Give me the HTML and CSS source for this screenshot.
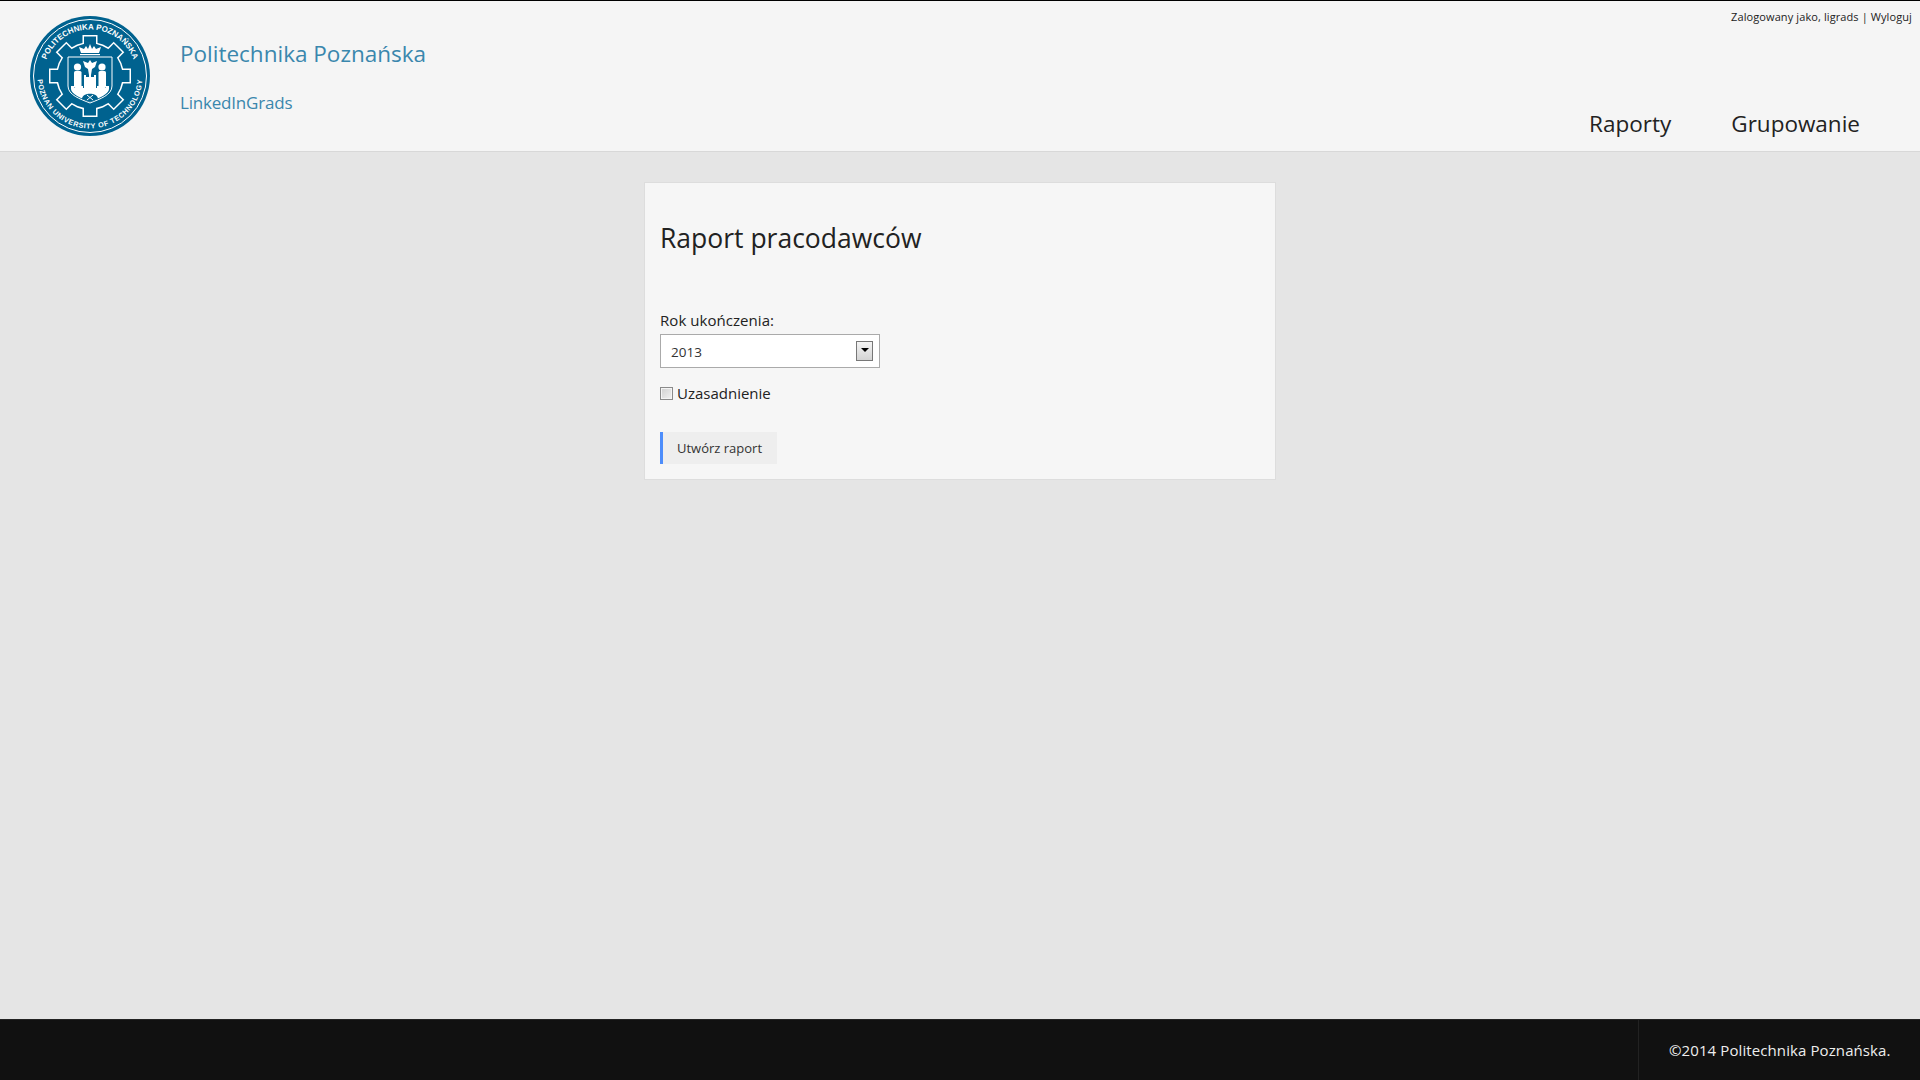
FILE: index.html
```html
<!DOCTYPE html>
<html lang="pl">
<head>
<meta charset="utf-8">
<title>Raport pracodawców</title>
<link rel="stylesheet" href="styles.css">
</head>
<body>
<header class="site-header">
  <div class="brand">
    <svg class="logo" viewBox="0 0 120 120" width="120" height="120" aria-label="Politechnika Poznańska">
      <defs>
        <path id="arcTop" d="M 13.5 60 A 46.5 46.5 0 0 1 106.5 60"/>
        <path id="arcBottom" d="M 7.5 60 A 52.5 52.5 0 0 0 112.5 60"/>
        <rect id="toothW" x="52.5" y="19" width="15" height="16"/>
        <rect id="toothB" x="54" y="20.5" width="12" height="16"/>
      </defs>
      <circle cx="60" cy="60" r="60" fill="#00628f"/>
      <circle cx="60" cy="60" r="56.5" fill="none" stroke="#fff" stroke-width="1"/>
      <text class="seal-text"><textPath href="#arcTop" startOffset="50%" text-anchor="middle">POLITECHNIKA POZNAŃSKA</textPath></text>
      <text class="seal-text seal-text-bottom"><textPath href="#arcBottom" startOffset="50%" text-anchor="middle">POZNAN UNIVERSITY OF TECHNOLOGY</textPath></text>
      <g fill="#fff">
        <use href="#toothW"/><use href="#toothW" transform="rotate(45 60 60)"/><use href="#toothW" transform="rotate(90 60 60)"/><use href="#toothW" transform="rotate(135 60 60)"/>
        <use href="#toothW" transform="rotate(180 60 60)"/><use href="#toothW" transform="rotate(225 60 60)"/><use href="#toothW" transform="rotate(270 60 60)"/><use href="#toothW" transform="rotate(315 60 60)"/>
        <circle cx="60" cy="60" r="34"/>
      </g>
      <g fill="#00628f">
        <use href="#toothB"/><use href="#toothB" transform="rotate(45 60 60)"/><use href="#toothB" transform="rotate(90 60 60)"/><use href="#toothB" transform="rotate(135 60 60)"/>
        <use href="#toothB" transform="rotate(180 60 60)"/><use href="#toothB" transform="rotate(225 60 60)"/><use href="#toothB" transform="rotate(270 60 60)"/><use href="#toothB" transform="rotate(315 60 60)"/>
        <circle cx="60" cy="60" r="32.5"/>
      </g>
      <path d="M38 41H82V70C82 79 70 83 60 87C50 83 38 79 38 70Z" fill="#00628f" stroke="#fff" stroke-width="1"/>
      <path d="M51 37L49 31L54 33L56 30L58 33L60 28L62 33L64 30L66 33L71 31L69 37Z" fill="#fff"/>
      <rect x="50" y="38" width="20" height="1.2" fill="#fff"/>
      <path d="M60 44L62 47L67 45L65 51L62 53L61 59H59L58 53L55 51L53 45L58 47Z" fill="#fff"/>
      <circle cx="47.5" cy="51" r="3.6" fill="#fff"/>
      <rect x="44" y="55" width="7.5" height="17" rx="1.5" fill="#fff"/>
      <circle cx="72" cy="51" r="3.6" fill="#fff"/>
      <rect x="68.5" y="55" width="7.5" height="17" rx="1.5" fill="#fff"/>
      <path d="M54 59H56V61H59V59H61V61H64V59H66V72H54Z" fill="#fff"/>
      <path d="M41 73V70H44V72H49V70H53V72H67V70H71V72H76V70H79V73C79 78 69 82 60 86C51 82 41 78 41 73Z" fill="#fff"/>
      <path d="M52 83C52 76 68 76 68 83C65 84 63 85 60 86C57 85 55 84 52 83Z" fill="#00628f"/>
      <path d="M57 79L63 84M63 79L57 84" stroke="#fff" stroke-width="1"/>
    </svg>
    <div class="brand-text">
      <a class="brand-title" href="#">Politechnika Poznańska</a>
      <a class="brand-sub" href="#">LinkedInGrads</a>
    </div>
  </div>
  <div class="header-right">
    <div class="user-bar">Zalogowany jako, ligrads | Wyloguj</div>
    <nav class="main-nav">
      <a href="#">Raporty</a>
      <a href="#">Grupowanie</a>
    </nav>
  </div>
</header>
<main class="content">
  <section class="panel">
    <h1 class="panel-title">Raport pracodawców</h1>
    <div class="field-label">Rok ukończenia:</div>
    <div class="select-box">
      <span>2013</span>
      <span class="select-arrow"></span>
    </div>
    <label class="check-row"><span class="check-box"></span><span>Uzasadnienie</span></label>
    <button class="submit" type="button">Utwórz raport</button>
  </section>
</main>
<footer class="site-footer">
  <div class="copyright">©2014 Politechnika Poznańska.</div>
</footer>
</body>
</html>
```
FILE: styles.css
```css
* { box-sizing: border-box; }
html, body { height: 100%; }
body {
  margin: 0;
  display: flex;
  flex-direction: column;
  min-height: 1080px;
  background: #e5e5e5;
  color: #222;
  font-family: "Open Sans", "Noto Sans", sans-serif;
}
a { text-decoration: none; color: inherit; }

.site-header {
  height: 152px;
  flex: none;
  display: flex;
  justify-content: space-between;
  background: #f5f5f5;
  border-top: 1px solid #000;
  border-bottom: 1px solid #d8d8d8;
}
.brand { display: flex; padding: 15px 0 0 30px; }
.logo { display: block; flex: none; }
.seal-text {
  font-family: "Liberation Sans", sans-serif;
  font-size: 8px;
  font-weight: 700;
  fill: #fff;
}
.seal-text-bottom { font-size: 7.2px; letter-spacing: 0.55px; }
.brand-text {
  display: flex;
  flex-direction: column;
  margin-left: 30px;
  color: #3a87ad;
}
.brand-title { font-size: 22.5px; line-height: 32px; margin-top: 22px; }
.brand-sub { font-size: 17px; line-height: 24px; margin-top: 21px; letter-spacing: -0.2px; }

.header-right {
  display: flex;
  flex-direction: column;
  align-items: flex-end;
  justify-content: space-between;
  padding: 8px 8px 0 0;
}
.user-bar { font-size: 11px; line-height: 16px; letter-spacing: 0.1px; color: #222; }
.main-nav {
  display: flex;
  gap: 60px;
  padding: 0 52px 11px 0;
  font-size: 22.5px;
  line-height: 32px;
}

.content { flex: 1; display: flex; justify-content: center; align-items: flex-start; padding-top: 30px; }
.panel {
  width: 632px;
  height: 298px;
  padding: 0 15px;
  background: #f6f6f6;
  border: 1px solid #ddd;
  display: flex;
  flex-direction: column;
  align-items: flex-start;
}
.panel-title { margin: 35px 0 0; font-size: 26.5px; line-height: 40px; font-weight: 400; }
.field-label { margin-top: 50px; font-size: 15px; line-height: 24px; letter-spacing: 0.05px; }
.select-box {
  width: 220px;
  height: 34px;
  margin-top: 2px;
  padding: 1px 6px 0 10px;
  display: flex;
  align-items: center;
  justify-content: space-between;
  background: #fff;
  border: 1px solid #aaa;
  font-size: 13.5px;
  color: #333;
}
.select-arrow {
  position: relative;
  width: 17px;
  height: 20px;
  margin-top: -1px;
  border: 1px solid #777;
  background: linear-gradient(#f4f4f4, #d4d4d4);
}
.select-arrow::after {
  content: "";
  position: absolute;
  left: 3.5px;
  top: 6px;
  border: 4px solid transparent;
  border-top: 4px solid #000;
  border-bottom: 0;
}
.check-row {
  display: flex;
  align-items: center;
  gap: 4px;
  margin-top: 13px;
  font-size: 15px;
  line-height: 24px;
}
.check-box {
  width: 13px;
  height: 13px;
  border: 1px solid #8a8a8a;
  background: linear-gradient(135deg, #d0d0d0, #f2f2f2);
  box-shadow: inset 0 0 0 1px #f4f4f4;
}
.submit {
  margin-top: 27px;
  height: 32px;
  width: 117px;
  padding: 0 0 0 14px;
  text-align: left;
  border: 0;
  border-left: 3px solid #4d8dfb;
  background: #eee;
  color: #333;
  font-family: inherit;
  font-size: 13px;
}

.site-footer {
  height: 61px;
  flex: none;
  display: flex;
  justify-content: flex-end;
  background: #111;
  border-top: 1px solid #222;
  color: #eee;
}
.copyright {
  width: 282px;
  padding: 0 0 0 30px;
  border-left: 1px solid #222;
  font-size: 15px;
  line-height: 60px;
  letter-spacing: 0.1px;
}
```
